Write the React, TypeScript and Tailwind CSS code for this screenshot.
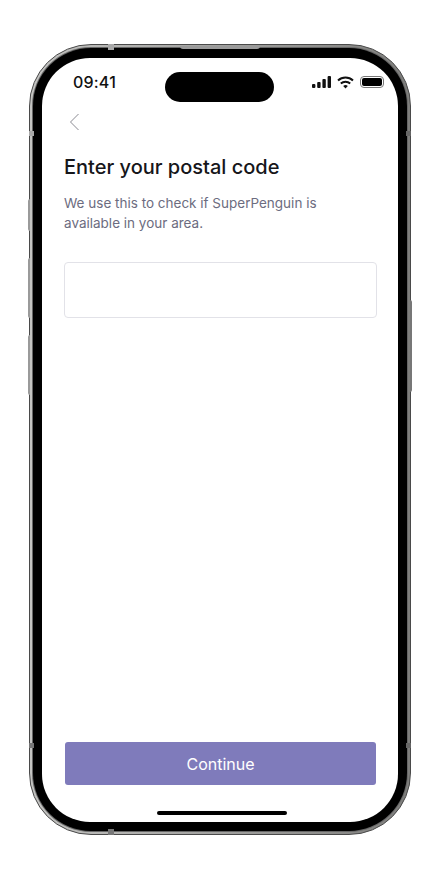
export default function App() {
  return (
    <div className="w-[440px] h-[880px] bg-white pt-[44px] pl-[29px] font-['Inter',sans-serif]">
      {/* phone body */}
      <div className="relative w-[382px] h-[791px] rounded-[62px] bg-gradient-to-r from-[#c4c4c2] to-[#7f7f7d] border border-[#4a4a4a] p-[3px]">
        {/* side buttons */}
        <div className="absolute left-[-2px] top-[154px] w-[2px] h-[32px] rounded-l bg-[#9a9a9a]" />
        <div className="absolute left-[-2px] top-[213px] w-[2px] h-[60px] rounded-l bg-[#9a9a9a]" />
        <div className="absolute left-[-2px] top-[290px] w-[2px] h-[60px] rounded-l bg-[#9a9a9a]" />
        <div className="absolute right-[-2px] top-[255px] w-[2px] h-[92px] rounded-r bg-[#777777]" />
        {/* antenna bands */}
        <div className="absolute left-[78px] top-[-1px] w-[6px] h-[6px] bg-[#a9a9a9]" />
        <div className="absolute left-[78px] bottom-[-1px] w-[6px] h-[6px] bg-[#777777]" />
        <div className="absolute left-[-1px] top-[86px] w-[5px] h-[5px] bg-[#a9a9a9]" />
        <div className="absolute left-[-1px] bottom-[86px] w-[5px] h-[5px] bg-[#777777]" />
        <div className="absolute right-[-1px] top-[86px] w-[5px] h-[5px] bg-[#666666]" />
        <div className="absolute right-[-1px] bottom-[86px] w-[5px] h-[5px] bg-[#666666]" />
        <div className="absolute left-[150px] top-[1px] w-[80px] h-[3px] rounded-b bg-[#9a9a9a]" />

        {/* bezel */}
        <div className="w-full h-full rounded-[58px] bg-black pt-[10px] pb-[9px] px-[9px] shadow-[0_0_0_1px_#666666]">
          {/* screen */}
          <div className="flex flex-col w-full h-full rounded-[48px] bg-white overflow-hidden">
            <div className="flex items-center h-[30px] mt-[14px] pl-[31px] pr-[14px] shrink-0">
              <span className="w-[92px] mb-[10px] text-[16px] leading-[20px] font-medium text-[#111111] tracking-[0.2px]">09:41</span>
              <div className="w-[109px] h-[30px] rounded-full bg-black" />
              <div className="flex items-center justify-end gap-[6px] flex-1 mb-[10px]">
                <svg width="19" height="12" viewBox="0 0 19 12" fill="#111">
                  <rect x="0" y="8" width="3.4" height="4" rx="1" />
                  <rect x="5.2" y="6" width="3.4" height="6" rx="1" />
                  <rect x="10.4" y="3" width="3.4" height="9" rx="1" />
                  <rect x="15.6" y="0" width="3.4" height="12" rx="1" />
                </svg>
                <svg width="17" height="13" viewBox="0 0 17 13" fill="none" stroke="#111" strokeWidth="2">
                  <path d="M1 4.5a11 11 0 0 1 15 0" />
                  <path d="M3.8 7.5a7 7 0 0 1 9.4 0" />
                  <path d="M8.5 12.5 6.2 10a3.4 3.4 0 0 1 4.6 0Z" fill="#111" stroke="none" />
                </svg>
                <div className="flex items-center justify-center w-[24px] h-[12px] rounded-[4px] border border-[#777777] p-[1px]">
                  <div className="w-full h-full rounded-[2px] bg-black" />
                </div>
              </div>
            </div>

            <div className="flex flex-col flex-1 px-[22px]">
              <svg className="mt-[11px] ml-[5px] shrink-0" width="11" height="18" viewBox="0 0 11 18" fill="none" stroke="#8a8a92" strokeWidth="1">
                <path d="M9.5 1 1.5 9l8 8" />
              </svg>
              <h1 className="mt-[22px] text-[20px] leading-[28px] font-medium text-[#16161a]">Enter your postal code</h1>
              <p className="mt-[12px] text-[13.5px] leading-[20px] text-[#6c6c80]">
                We use this to check if SuperPenguin is
                <br />
                available in your area.
              </p>
              <div className="mt-[29px] h-[56px] w-[313px] rounded-[4px] border border-[#e2e2e8] bg-white" />
              <div className="flex-1" />
              <button className="flex items-center justify-center ml-[1px] w-[311px] h-[43px] rounded-[3px] bg-[#7f7bbb] text-[16px] font-normal text-white">
                Continue
              </button>
              <div className="self-center ml-[4px] mt-[26px] mb-[7px] w-[130px] h-[4px] rounded-full bg-black" />
            </div>
          </div>
        </div>
      </div>
    </div>
  )
}
